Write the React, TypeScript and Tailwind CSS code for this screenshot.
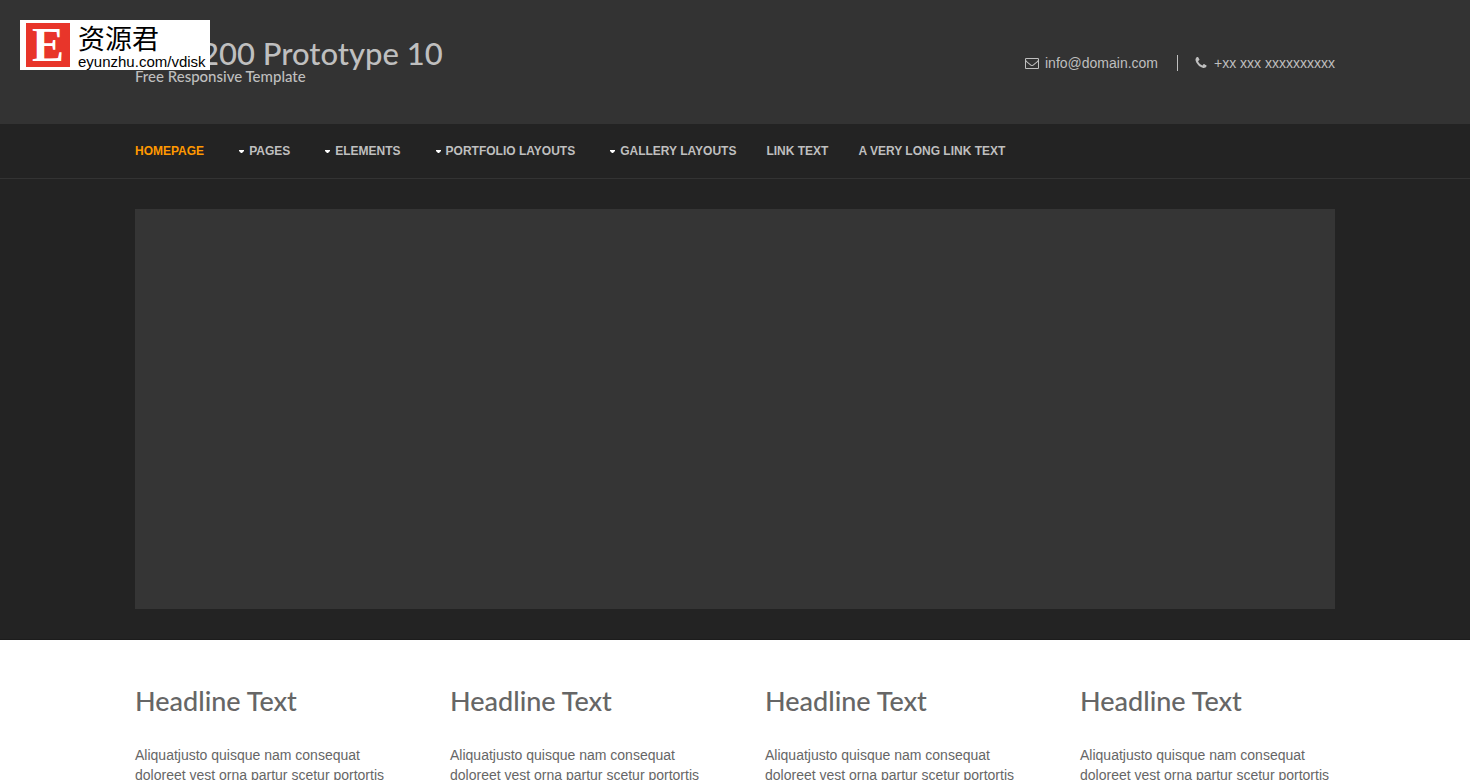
interface NavItem {
  label: string;
  drop?: boolean;
  active?: boolean;
}

const NAV: NavItem[] = [
  { label: "Homepage", active: true },
  { label: "Pages", drop: true },
  { label: "Elements", drop: true },
  { label: "Portfolio Layouts", drop: true },
  { label: "Gallery Layouts", drop: true },
  { label: "Link Text" },
  { label: "A Very Long Link Text" },
];

const COLUMNS = [1, 2, 3, 4];

function EnvelopeIcon() {
  return (
    <svg viewBox="0 0 1792 1792" className="w-3.5 h-3.5" fill="currentColor" aria-hidden="true">
      <path d="M1664 1504v-768q-32 36-69 66-268 206-426 338-51 43-83 67t-86.500 48.500-102.500 24.500h-2q-48 0-102.500-24.500t-86.500-48.500-83-67q-158-132-426-338-37-30-69-66v768q0 13 9.500 22.500t22.500 9.500h1472q13 0 22.500-9.500t9.500-22.500zm0-1051v-24.500l-.5-13-3-12.500-5.500-9-9-7.500-14-2.500h-1472q-13 0-22.500 9.500t-9.500 22.500q0 168 147 284 193 152 401 317 6 5 35 29.500t46 37.500 44.500 31.500 50.500 27.500 43 9h2q20 0 43-9t50.500-27.500 44.500-31.500 46-37.500 35-29.500q208-165 401-317 54-43 100.500-115.500t46.500-131.500zm128-37v1088q0 66-47 113t-113 47h-1472q-66 0-113-47t-47-113v-1088q0-66 47-113t113-47h1472q66 0 113 47t47 113z" />
    </svg>
  );
}

function PhoneIcon() {
  return (
    <svg viewBox="0 0 1792 1792" className="w-3.5 h-3.5" fill="currentColor" aria-hidden="true">
      <path d="M1600 1240q0 27-10 70.500t-21 68.500q-21 50-122 106-94 51-186 51-27 0-53-3.500t-57.500-12.500-47-14.500-55.500-20.500-49-18q-98-35-175-83-127-79-264-216t-216-264q-48-77-83-175-3-9-18-49t-20.500-55.500-14.500-47-12.500-57.500-3.500-53q0-92 51-186 56-101 106-122 25-11 68.500-21t70.500-10q14 0 21 3 18 6 53 76 11 19 30 54t35 63.500 31 53.500q3 4 17.500 25t21.500 35.500 7 28.500q0 20-28.500 50t-62 55-62 53-28.500 46q0 9 5 22.500t8.500 20.500 14 24 11.500 19q76 137 174 235t235 174q2 1 19 11.500t24 14 20.500 8.500 22.500 5q18 0 46-28.500t53-62 55-62 50-28.500q14 0 28.500 7t35.500 21.500 25 17.500q25 15 53.500 31t63.500 35 54 30q70 35 76 53 3 7 3 21z" />
    </svg>
  );
}

// sits over the page header, top left
function SiteBadge() {
  return (
    <a
      href="#"
      className="absolute left-5 top-5 w-[190px] h-[50px] bg-white text-black flex items-center gap-2 pl-1.5"
    >
      <span className="w-11 h-11 shrink-0 bg-[#e8352a] text-white flex items-center justify-center font-bold text-5xl leading-11 font-['Liberation_Serif',serif]">
        E
      </span>
      <span className="flex flex-col pt-0.5">
        <span className="text-[27px] leading-8 font-['Noto_Sans_CJK_SC',sans-serif]">资源君</span>
        <span className="text-[15px] leading-4 font-['Liberation_Sans',sans-serif]">eyunzhu.com/vdisk</span>
      </span>
    </a>
  );
}

function Header() {
  return (
    <header className="bg-[#333333] text-[#bfbfbf] px-5 h-[124px]">
      <div className="max-w-[1200px] h-full mx-auto flex items-center justify-between">
        <div className="pb-0.5 font-medium font-['Lato',sans-serif]">
          <h1 className="text-[31px] leading-[30px]">
            <a href="#">RS-1200 Prototype 10</a>
          </h1>
          <p className="text-[15px] leading-4">Free Responsive Template</p>
        </div>
        <ul className="flex items-center pt-0.5 text-sm leading-4">
          <li className="flex items-center gap-1.5 pr-[19px] border-r border-[#bfbfbf]">
            <EnvelopeIcon />
            info@domain.com
          </li>
          <li className="flex items-center gap-1.5 pl-4">
            <PhoneIcon />
            +xx xxx xxxxxxxxxx
          </li>
        </ul>
      </div>
    </header>
  );
}

function Nav() {
  return (
    <nav className="px-5 border-b border-[#333333]">
      <ul className="max-w-[1200px] mx-auto flex gap-[30px] py-[17px] text-xs leading-5 font-bold uppercase text-[#bfbfbf]">
        {NAV.map((item) => (
          <li key={item.label}>
            <a href="#" className={`flex items-center gap-[5px] ${item.active ? "text-[#ff9900]" : ""}`}>
              {item.drop && (
                <svg viewBox="0 0 5 3" className="w-[5px] h-[3px] ml-[5px]" fill="#ffffff" aria-hidden="true">
                  <path d="M0 0h5v1L3 3H2L0 1z" />
                </svg>
              )}
              {item.label}
            </a>
          </li>
        ))}
      </ul>
    </nav>
  );
}

export default function App() {
  return (
    <div className="relative bg-[#232323] font-['Liberation_Sans',Arial,sans-serif]">
      <Header />
      <Nav />
      <section className="px-5 py-[30px] border-b border-[#1c1c1c]">
        <div className="max-w-[1200px] h-[400px] mx-auto bg-[#353535]" />
      </section>
      <main className="bg-white text-[#666666] px-5 pt-10">
        <div className="max-w-[1200px] mx-auto grid grid-cols-4 gap-[60px]">
          {COLUMNS.map((col) => (
            <article key={col}>
              <h2 className="font-['Lato',sans-serif] font-medium text-[27px] leading-[42px] mb-[23px]">Headline Text</h2>
              <p className="text-sm leading-5">
                Aliquatjusto quisque nam consequat doloreet vest orna partur scetur portortis
              </p>
            </article>
          ))}
        </div>
      </main>
      <SiteBadge />
    </div>
  );
}
